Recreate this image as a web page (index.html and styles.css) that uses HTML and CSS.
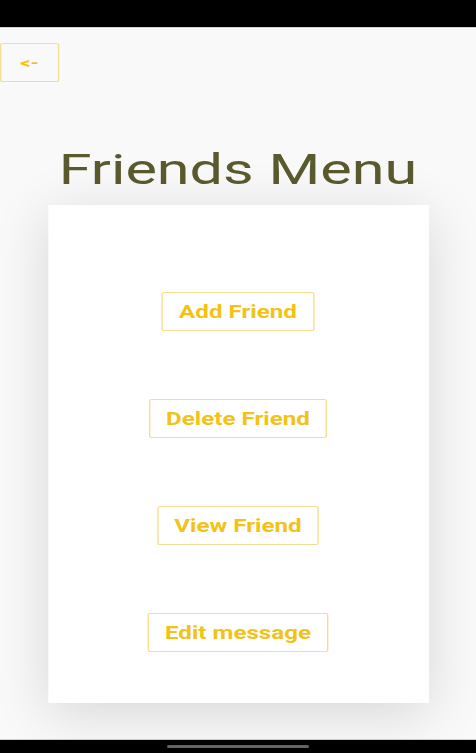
FILE: index.html
```html
<!DOCTYPE html>
<html>
<head>
<meta charset="utf-8">
<link rel="stylesheet" href="styles.css">
</head>
<body>
<div class="status-bar"></div>
<main class="screen">
  <div class="top-row">
    <button class="btn back-btn">&lt;-</button>
  </div>
  <h1 class="title">Friends Menu</h1>
  <section class="card">
    <button class="btn menu-btn">Add Friend</button>
    <button class="btn menu-btn">Delete Friend</button>
    <button class="btn menu-btn">View Friend</button>
    <button class="btn menu-btn">Edit message</button>
  </section>
</main>
<div class="nav-bar"><span class="home-pill"></span></div>
</body>
</html>
```
FILE: styles.css
```css
html, body {
  margin: 0;
  padding: 0;
}
body {
  width: 476px;
  height: 753px;
  display: flex;
  flex-direction: column;
  overflow: hidden;
  font-family: Roboto, "Noto Sans", sans-serif;
  background: #000;
}
.status-bar {
  height: 27px;
  background: #000;
  flex: none;
}
/* the source screenshot is horizontally stretched; the screen is laid out
   at its native width and stretched to fill the window */
.screen {
  flex: none;
  width: 345px;
  height: 712px;
  box-sizing: border-box;
  transform: scaleX(1.3797);
  transform-origin: 0 0;
  background: #f9f9f9;
  display: flex;
  flex-direction: column;
  align-items: center;
  border-top: 1px solid #d4d4d4;
}
.top-row {
  align-self: stretch;
  padding-top: 15px;
}
.btn {
  background: #fff;
  border: 1px solid #f3df92;
  border-radius: 2px;
  color: #f4c214;
  font-family: Roboto, "Noto Sans", sans-serif;
  font-weight: 700;
  font-size: 17.5px;
  cursor: pointer;
}
.back-btn {
  width: 42.5px;
  height: 39px;
  font-size: 15px;
  background: transparent;
  padding: 0;
}
.title {
  margin: 62px 0 0;
  font-family: Roboto, "Noto Sans", sans-serif;
  font-weight: 400;
  font-size: 43px;
  line-height: 50px;
  color: #5b5a2e;
}
.card {
  margin-top: 11px;
  width: 276px;
  height: 498px;
  box-sizing: border-box;
  background: #fff;
  box-shadow: 0 10px 44px rgba(0,0,0,0.14);
  display: flex;
  flex-direction: column;
  align-items: center;
  padding-top: 87px;
  gap: 68px;
}
.menu-btn {
  height: 39px;
  padding: 0 11.5px;
}
.nav-bar {
  height: 14px;
  flex: none;
  box-sizing: border-box;
  border-top: 1px solid #cfcfcf;
  background: #000;
  display: flex;
  justify-content: center;
  align-items: center;
}
.home-pill {
  width: 142px;
  height: 3px;
  border-radius: 2px;
  background: #666;
}
```
